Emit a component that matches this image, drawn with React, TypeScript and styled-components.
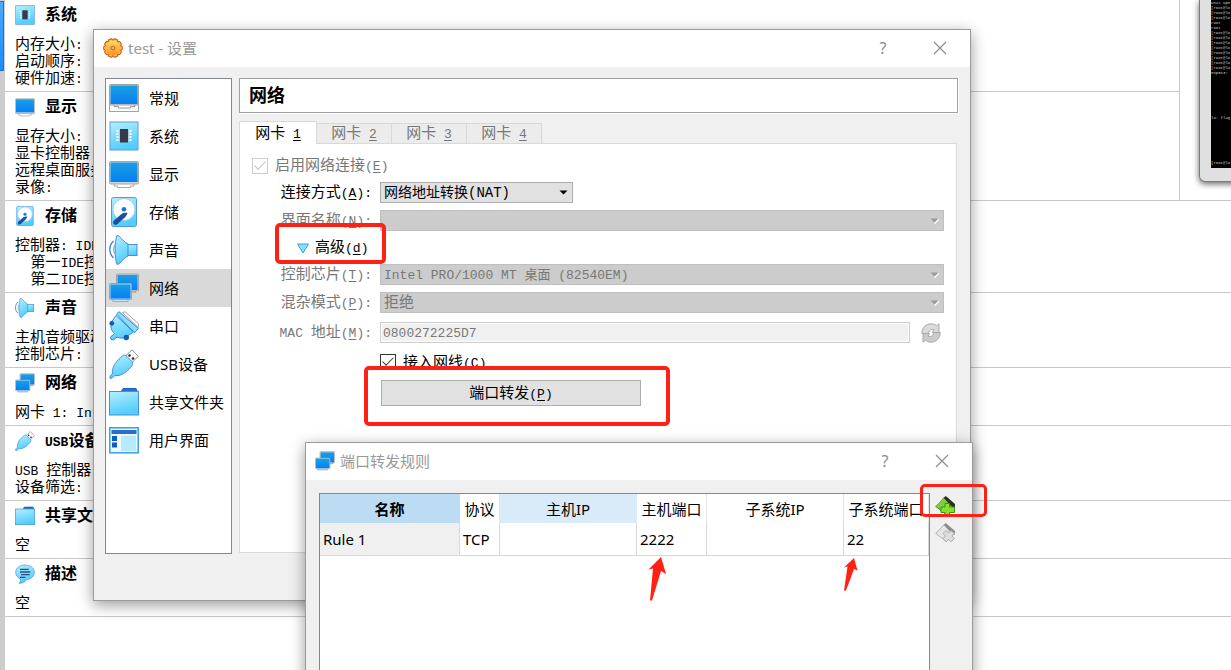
import React, { useId, useState } from "react";
import styled, { createGlobalStyle, css } from "styled-components";

const GlobalStyle = createGlobalStyle`
  *, *::before, *::after { box-sizing: border-box; }
  html, body { margin: 0; padding: 0; }
  body {
    font-family: "Liberation Mono", "Noto Sans CJK SC", monospace;
    font-size: 15px;
    color: #000;
    background: #fff;
  }
`;

const systemFont = css`
  font-family: "Liberation Mono", "Noto Sans CJK SC", monospace;
`;
const windowFont = css`
  font-family: "Noto Sans", "Noto Sans CJK SC", sans-serif;
`;

/* ---------- text ---------- */

const Latin = styled.span`
  font-size: 13px;
  white-space: pre;
`;

const Mnemonic = styled.span`
  text-decoration: underline;
  text-underline-offset: 2px;
`;

function Mixed({ text, mnemonic }: { text: string; mnemonic?: string }) {
  const parts = text.split(/([\x20-\x7e]+)/).filter(Boolean);
  return (
    <>
      {parts.map((part, i) => {
        if (!/^[\x20-\x7e]/.test(part)) return <React.Fragment key={i}>{part}</React.Fragment>;
        const at = mnemonic && i > 0 ? part.lastIndexOf(mnemonic) : -1;
        if (at < 0) return <Latin key={i}>{part}</Latin>;
        return (
          <Latin key={i}>
            {part.slice(0, at)}
            <Mnemonic>{part[at]}</Mnemonic>
            {part.slice(at + 1)}
          </Latin>
        );
      })}
    </>
  );
}

/* ---------- icons ---------- */

type IconName =
  | "general" | "system" | "display" | "storage" | "sound" | "network"
  | "serial" | "usb" | "folder" | "ui" | "description";

function IconArt({ name, id }: { name: IconName; id: string }) {
  const sky = `url(#${id}s)`;
  const screen = `url(#${id}b)`;
  switch (name) {
    case "general":
      return (
        <>
          <rect x="0.5" y="19" width="29" height="9.5" fill="#fafafa" stroke="#a3a3a3" />
          <path d="M5 22v1.500h4.500v1.500h12v-1.500h4.500V22" fill="#fff" stroke="#9a9a9a" />
          <rect x="0.500" y="1.500" width="29" height="20.500" rx="1" fill="#c9c9c9" stroke="#a3a3a3" />
          <rect x="1.500" y="2.500" width="27" height="18.500" fill={screen} />
        </>
      );
    case "display":
      return (
        <>
          <path d="M5 24h20v3h-3.500v1.500h-13V27H5z" fill="#fff" stroke="#a8a8a8" />
          <rect x="0.500" y="2.500" width="29" height="22.500" rx="1.500" fill="#d2d2d2" stroke="#a6a6a6" />
          <rect x="1.500" y="3.500" width="27" height="19.500" fill={screen} />
        </>
      );
    case "system":
      return (
        <>
          <rect x="1" y="1" width="28" height="28" fill={sky} stroke="#5a9fe0" />
          <path d="M7.500 10h15M7.500 13h15M7.500 16h15M7.500 19h15" stroke="#f5fbff" strokeWidth="2" />
          <path d="M9.500 10h11M9.500 13h11M9.500 16h11M9.500 19h11" stroke="#8b93a0" strokeWidth="1" />
          <rect x="11" y="8" width="8" height="13.500" fill="#363a48" />
        </>
      );
    case "storage":
      return (
        <>
          <rect x="2.500" y="0.500" width="25" height="29" rx="2" fill={sky} stroke="#4f9be2" />
          <circle cx="15" cy="12.500" r="11" fill="#fdfeff" stroke="#a9cdf0" />
          <circle cx="15" cy="12.300" r="2.300" fill="#1f74cc" />
          <path d="M5 23.500 12.500 17c1.500-1.200 4-1.500 6-1.200-.5 2-1.500 3.700-3 5L8 27.500c-2.500 1.500-5.300-1.500-3-4z" fill="#1c4f9f" />
        </>
      );
    case "sound":
      return (
        <>
          <path d="M4.500 6C-.5 11-.5 18 4.500 23" fill="none" stroke="#3a7fcc" strokeWidth="1.300" />
          <path d="M6 10c-2 2.500-2 6.500 0 9" fill="none" stroke="#7fb4e6" strokeWidth="1.200" />
          <rect x="18" y="9.500" width="10" height="11" fill={sky} stroke="#4390dc" />
          <path d="M8 .7c3.500-.5 4.500 5 11 8.300v12c-6.500 3.300-7.500 8.800-11 8.300C5.500 24 5.500 6 8 .7z" fill={sky} stroke="#4390dc" />
        </>
      );
    case "network":
      return (
        <>
          <path d="M12 17h13l2 2h-13z" fill="#ddd" stroke="#999" />
          <rect x="7.500" y="1" width="22" height="17" rx="1" fill="#d3d3d3" stroke="#9aa6b3" />
          <rect x="8.500" y="2" width="20" height="15" fill={screen} />
          <path d="M4 26.500h15v2H4z" fill="#cfe2f5" stroke="#8aaed4" />
          <rect x="0.500" y="10.500" width="22" height="16" rx="1" fill="#b6d4f0" stroke="#86a9cd" />
          <rect x="1.500" y="11.500" width="20" height="14" fill={screen} />
        </>
      );
    case "serial":
      return (
        <>
          <path d="M13.500 1.500 16 .8 29.300 12.500v4z" fill="#fff" stroke="#a3a3a3" />
          <path d="M7 4.500 2.500 11C1 16 2.500 20 5.500 22.500L1.500 26 2 28.500l2.500.5L8 26c3 1.500 6.500 1.500 9 0l7.500-5z" fill={sky} stroke="#378ad6" />
          <path d="M7.500 3 10 .7 29.400 17.500 25.500 21.700z" fill="#8adcfd" stroke="#378ad6" />
          <circle cx="2.800" cy="12.300" r="2.400" fill="#1758b8" />
          <circle cx="17.300" cy="26.500" r="2.700" fill="#1758b8" />
        </>
      );
    case "usb":
      return (
        <>
          <path d="M16 7.500 23 .8l6.300 6.400L22.500 14z" fill="#fafafa" stroke="#8d8d8d" />
          <circle cx="20.500" cy="6.500" r="1.200" fill="#222" />
          <circle cx="24" cy="9.500" r="1.200" fill="#222" />
          <path d="M13.500 7c1.500-1.200 3-1 4.500.5l4.500 4.500c1.500 1.500 1.500 3 .5 4.500C19.500 21.500 14 26 9 26.500l-3.500.2-2.500 2.500H1v-2l2.500-2.700L3.700 21C4 16 8.500 11 13.500 7z" fill={sky} stroke="#4390dc" />
        </>
      );
    case "folder":
      return (
        <>
          <path d="M11.500 6 14 1.500h13L29 6z" fill="#2c6fcd" stroke="#225fbc" />
          <rect x="0.500" y="4.500" width="29" height="23.500" fill={sky} stroke="#4390dc" />
        </>
      );
    case "ui":
      return (
        <>
          <rect x="0.800" y="2.800" width="28.400" height="25" fill="#eefaff" stroke="#35a0e4" strokeWidth="1.500" />
          <rect x="2.500" y="5" width="25" height="4" fill="#2a6cc8" />
          <rect x="3" y="11" width="5" height="5" fill="#0f5bc4" />
          <rect x="3" y="17.500" width="5" height="5" fill="#0f5bc4" />
          <rect x="12" y="10.500" width="15" height="15.500" fill="#b5eaff" />
        </>
      );
    case "description":
      return (
        <>
          <path d="M15 1.500c8 0 14 4.500 14 11S23.500 23 17.500 23.500c-2 3-6 5.500-11.500 5.500 2-2 2.500-4 2-6.500C4 20.500 1 17.500 1 12.500 1 6 7 1.500 15 1.500z" fill={sky} stroke="#4390dc" />
          <path d="M7.500 8h13M7.500 12h15.500M9 16h13M7.500 20h8" stroke="#28517f" strokeWidth="2" />
        </>
      );
  }
}

const IconSvg = styled.svg<{ $size: number }>`
  width: ${(p) => p.$size}px;
  height: ${(p) => p.$size}px;
  flex: none;
  display: block;
`;

function Icon({ name, size }: { name: IconName; size: number }) {
  const id = "g" + useId().replace(/[^a-zA-Z0-9]/g, "");
  return (
    <IconSvg $size={size} viewBox="0 0 30 30" aria-hidden="true">
      <defs>
        <linearGradient id={`${id}s`} x1="0" y1="0" x2="0.3" y2="1">
          <stop offset="0" stopColor="#b6effe" />
          <stop offset="1" stopColor="#52cdfc" />
        </linearGradient>
        <linearGradient id={`${id}b`} x1="0" y1="0" x2="0" y2="1">
          <stop offset="0" stopColor="#1b9fe4" />
          <stop offset="1" stopColor="#0480f4" />
        </linearGradient>
      </defs>
      <IconArt name={name} id={id} />
    </IconSvg>
  );
}

function GearIcon() {
  const teeth = Array.from({ length: 10 }, (_, i) => i * 36);
  return (
    <IconSvg $size={20} viewBox="0 0 20 20" aria-hidden="true">
      <defs>
        <linearGradient id="gear" x1="0" y1="0" x2="0" y2="1">
          <stop offset="0" stopColor="#ffd95f" />
          <stop offset="1" stopColor="#f8952b" />
        </linearGradient>
      </defs>
      <g fill="#c9571c">
        {teeth.map((a) => (
          <rect key={a} x="7.400" y="0.200" width="5.200" height="5" rx="1.600" transform={`rotate(${a + 18} 10 10)`} />
        ))}
      </g>
      <circle cx="10" cy="10" r="8.500" fill="#dd7226" />
      <g fill="#ffc045">
        {teeth.map((a) => (
          <rect key={a} x="8.500" y="1.200" width="3" height="4" rx="1" transform={`rotate(${a + 18} 10 10)`} />
        ))}
      </g>
      <circle cx="10" cy="10" r="7.400" fill="url(#gear)" />
      <circle cx="10" cy="10" r="2" fill="#f58b2a" stroke="#cf6a22" />
      <circle cx="10" cy="10" r="0.800" fill="#ffd9a0" />
    </IconSvg>
  );
}

function RefreshIcon() {
  return (
    <IconSvg $size={20} viewBox="0 0 20 20" aria-hidden="true">
      <path d="M.8 10.500C.8 4.500 4.800.8 10 .8c2.300 0 4 .7 5.500 2L18 .8v8.700h-6.500l1.500-2.800c-2.500-1-5 .3-5.500 3.800z" fill="#dadada" stroke="#a8a8a8" />
      <path d="M19.200 9.500c0 6-4 9.700-9.200 9.700-2.300 0-4-.7-5.500-2L2 19.200v-8.700h6.500L7 13.300c2.500 1 5-.3 5.500-3.800z" fill="#cbcbcb" stroke="#a8a8a8" />
    </IconSvg>
  );
}

function RuleIcon({ kind }: { kind: "add" | "remove" }) {
  const add = kind === "add";
  return (
    <IconSvg $size={20} viewBox="0 0 20 20" aria-hidden="true">
      <path
        d="M.8 10.500 9.500 1.200l9.800 9.300-8 8z"
        fill={add ? "#7ed03a" : "#e6e6e6"}
        stroke={add ? "#3f9a1b" : "#b4b4b4"}
      />
      {add && <path d="M.8 10.500 9.500 1.200" stroke="#e8892e" strokeWidth="1" />}
      <path d="m8.800 2 2-2 9.200 8v3.500l-2 .5z" fill={add ? "#26302a" : "#8e8e8e"} />
      {add ? (
        <path d="M10 7.500h4.500v3.500h5v5.500h-5v3H10v-3H6V11h4z" fill="#86e02c" stroke="#379316" />
      ) : (
        <path d="m8 10.500 3-3 2.500 2.500L16 7.500l3.300 3-2.500 2.500 2.500 2.500-3.300 3.300-2.500-2.500-2.500 2.500-3-3.300 2.500-2.500z" fill="#dedede" stroke="#a8a8a8" />
      )}
    </IconSvg>
  );
}

/* ---------- desktop behind the dialogs ---------- */

const Desktop = styled.div`
  position: relative;
  display: flex;
  height: 100vh;
  min-height: 620px;
  overflow: hidden;
  background: #fff;
`;

const MachineStrip = styled.div`
  flex: none;
  width: 5px;
  padding: 1px 1px 0 0;
  background: #cdcdcd;
`;

const ActiveMachine = styled.div`
  height: 70px;
  background: linear-gradient(#4aaaff, #1a8cff);
  border: 1px solid #1a76cf;
  border-left: 0;
`;

const Details = styled.main`
  flex: 1;
  min-width: 0;
`;

const TopRow = styled.div`
  display: flex;
`;

const TopSections = styled.div`
  flex: 1;
  min-width: 0;
`;

const SectionBox = styled.section`
  padding-bottom: 3px;
  border-bottom: 1px solid #c8c8c8;
`;

const SectionHead = styled.h2`
  display: flex;
  align-items: center;
  gap: 10px;
  height: 30px;
  margin: 0 0 7px;
  padding-left: 10px;
  font-size: 16px;
  font-weight: 700;
  line-height: 26px;
  white-space: nowrap;
`;

const SectionName = styled.span`
  padding-top: 2px;
`;

const SectionLine = styled.p`
  height: 17px;
  margin: 0;
  padding-left: 10px;
  line-height: 17px;
  white-space: nowrap;
`;

const Preview = styled.aside`
  flex: none;
  width: 52px;
  padding-left: 19px;
  overflow: hidden;
  border-left: 1px solid #c8c8c8;
  border-bottom: 1px solid #c8c8c8;
`;

const Monitor = styled.div`
  width: 200px;
  height: 182px;
  padding: 0 11px 13px;
  border: solid #7b7b7b;
  border-width: 0 1px 1px;
  border-radius: 0 0 6px 6px;
  background: #e0e0e0;
  box-shadow: 0 2px 6px rgba(0, 0, 0, 0.6);
`;

const Console = styled.pre`
  height: 168px;
  margin: 0;
  padding-top: 1px;
  overflow: hidden;
  background: #000;
  color: #d0d0d0;
  font: 4px/5px "Liberation Mono", monospace;
`;

const prompt = "[root@lo";
const consoleText = [
  "Unit ope",
  ...Array(3).fill(prompt),
  "root",
  "root",
  ...Array(8).fill(prompt),
  "enp0s3:",
  ...Array(8).fill(""),
  "lo: flag",
  ...Array(8).fill(""),
  prompt,
].join("\n");

type SectionData = { icon: IconName; title: string; lines: string[] };

const topSections: SectionData[] = [
  { icon: "system", title: "系统", lines: ["内存大小:", "启动顺序:", "硬件加速:"] },
  { icon: "display", title: "显示", lines: ["显存大小:", "显卡控制器:", "远程桌面服务器:", "录像:"] },
];

const lowerSections: SectionData[] = [
  { icon: "storage", title: "存储", lines: ["控制器: IDE", "  第一IDE控制器", "  第二IDE控制器"] },
  { icon: "sound", title: "声音", lines: ["主机音频驱动:", "控制芯片:"] },
  { icon: "network", title: "网络", lines: ["网卡 1: Intel"] },
  { icon: "usb", title: "USB设备", lines: ["USB 控制器:", "设备筛选:"] },
  { icon: "folder", title: "共享文件夹", lines: ["空"] },
  { icon: "description", title: "描述", lines: ["空"] },
];

function Section({ icon, title, lines }: SectionData) {
  return (
    <SectionBox>
      <SectionHead>
        <Icon name={icon} size={20} />
        <SectionName><Mixed text={title} /></SectionName>
      </SectionHead>
      {lines.map((line) => (
        <SectionLine key={line}><Mixed text={line} /></SectionLine>
      ))}
    </SectionBox>
  );
}

/* ---------- windows ---------- */

const Window = styled.section`
  position: absolute;
  border: 1px solid #9b9b9b;
  background: #f0f0f0;
  box-shadow: 0 4px 14px rgba(0, 0, 0, 0.4);
`;

const SettingsWindow = styled(Window)`
  top: 29px;
  left: 93px;
  right: 260px;
  min-width: 640px;
`;

const RulesWindow = styled(Window)`
  display: flex;
  flex-direction: column;
  top: 442px;
  left: 305px;
  right: 258px;
  min-width: 668px;
  height: 400px;
`;

const TitleBar = styled.header`
  display: flex;
  align-items: center;
  height: 37px;
  padding: 0 16px 2px 9px;
  background: #fff;
`;

const Title = styled.h1`
  flex: 1;
  margin: 0;
  padding-left: 5px;
  ${windowFont}
  font-size: 15px;
  font-weight: 400;
  color: #999;
`;

const TitleButton = styled.button`
  display: grid;
  place-items: center;
  width: 28px;
  height: 28px;
  margin-left: 29px;
  padding: 0;
  border: 0;
  background: none;
  color: #8c8c8c;
  ${windowFont}
  font-size: 16px;
`;

function WindowButtons() {
  return (
    <>
      <TitleButton type="button" aria-label="帮助">?</TitleButton>
      <TitleButton type="button" aria-label="关闭">
        <svg width="14" height="14" viewBox="0 0 14 14" aria-hidden="true">
          <path d="m1 1 12 12M13 1 1 13" stroke="#8c8c8c" strokeWidth="1.1" />
        </svg>
      </TitleButton>
    </>
  );
}

const SettingsBody = styled.div`
  display: flex;
  gap: 7px;
  padding: 11px 12px 46px 11px;
`;

const Nav = styled.nav`
  flex: none;
  width: 127px;
  min-height: 476px;
  border: 1px solid #828790;
  background: #fff;
`;

const NavItem = styled.button<{ $active: boolean }>`
  display: flex;
  align-items: center;
  gap: 10px;
  width: 100%;
  height: 38px;
  padding: 0 0 0 3px;
  border: 0;
  background: ${(p) => (p.$active ? "#d9d9d9" : "transparent")};
  color: #000;
  ${windowFont}
  font-size: 15px;
  white-space: nowrap;
`;

const NavLabel = styled.span`
  padding-bottom: 2px;
`;

const navItems: [IconName, string][] = [
  ["general", "常规"],
  ["system", "系统"],
  ["display", "显示"],
  ["storage", "存储"],
  ["sound", "声音"],
  ["network", "网络"],
  ["serial", "串口"],
  ["usb", "USB设备"],
  ["folder", "共享文件夹"],
  ["ui", "用户界面"],
];

const Page = styled.div`
  display: flex;
  flex: 1;
  flex-direction: column;
  min-width: 0;
`;

const PageTitle = styled.h2`
  height: 35px;
  margin: 0 0 8px;
  padding-left: 9px;
  border: 1px solid #a0a0a0;
  background: #fff;
  box-shadow: 1px 1px 0 #fff;
  ${windowFont}
  font-size: 18px;
  font-weight: 700;
  line-height: 33px;
`;

const Tabs = styled.div`
  display: flex;
  align-items: flex-end;
  height: 22px;
`;

const Tab = styled.button<{ $active: boolean }>`
  position: relative;
  width: ${(p) => (p.$active ? 78 : 75)}px;
  height: ${(p) => (p.$active ? 23 : 20)}px;
  margin-bottom: ${(p) => (p.$active ? -1 : 0)}px;
  padding: 2px 0 0;
  border: 1px solid #d9d9d9;
  border-left-width: ${(p) => (p.$active ? 1 : 0)}px;
  border-bottom: 0;
  background: ${(p) => (p.$active ? "#fff" : "#ececec")};
  color: ${(p) => (p.$active ? "#000" : "#787878")};
  z-index: ${(p) => (p.$active ? 1 : 0)};
  ${systemFont}
  font-size: 15px;
  line-height: 17px;
`;

const TabPane = styled.div`
  display: flex;
  flex: 1;
  flex-direction: column;
  gap: 7px;
  margin: 0 1px 1px 0;
  padding: 12px 12px 0 0;
  border: 1px solid #d9d9d9;
  background: #fff;
`;

const FieldRow = styled.div<{ $height: number; $muted?: boolean }>`
  display: grid;
  grid-template-columns: 132px minmax(0, 1fr);
  column-gap: 8px;
  align-items: center;
  height: ${(p) => p.$height}px;
  color: ${(p) => (p.$muted ? "#787878" : "#000")};
`;

const FieldLabel = styled.label`
  padding-top: 2px;
  line-height: 19px;
  text-align: right;
  white-space: nowrap;
`;

const CheckRow = styled.div<{ $muted?: boolean; $indent: number }>`
  display: flex;
  align-items: center;
  gap: 7px;
  height: 20px;
  padding-left: ${(p) => p.$indent}px;
  color: ${(p) => (p.$muted ? "#787878" : "#000")};
  line-height: 18px;

  &:first-child { height: 19px; }

  label { padding-top: 3px; }
`;

const CheckBox = styled.input`
  appearance: none;
  display: grid;
  place-items: center;
  width: 16px;
  height: 16px;
  margin: 0;
  border: 1px solid #333;
  background: #fff;

  &:disabled { border-color: #ccc; }
  &:checked::before {
    content: "";
    width: 12px;
    height: 6px;
    margin-top: -4px;
    border: solid #333;
    border-width: 0 0 1px 1px;
    rotate: -45deg;
    scale: 0.9;
  }
  &:disabled:checked::before { border-color: #bbb; }
`;

const SelectWrap = styled.div<{ $width?: number }>`
  position: relative;
  width: ${(p) => (p.$width ? `${p.$width}px` : "100%")};
  height: 21px;
`;

const SelectBox = styled.select<{ $size: number }>`
  appearance: none;
  display: block;
  width: 100%;
  height: 21px;
  padding: 1px 20px 0 3px;
  border: 1px solid #adadad;
  border-radius: 0;
  background: #e1e1e1;
  color: #000;
  ${systemFont}
  font-size: ${(p) => p.$size}px;
  line-height: 19px;

  &:disabled {
    border-color: #bfbfbf;
    background: #ccc;
    color: #787878;
    opacity: 1;
  }
`;

const SelectArrow = styled.svg`
  position: absolute;
  top: 8px;
  right: 5px;
  width: 9px;
  height: 6px;
  pointer-events: none;
`;

function Select(props: { id: string; label: string; value: string; size?: number; width?: number; disabled?: boolean }) {
  return (
    <SelectWrap $width={props.width}>
      <SelectBox id={props.id} $size={props.size ?? 15} disabled={props.disabled} aria-label={props.label} defaultValue={props.value}>
        <option value={props.value}>{props.value}</option>
      </SelectBox>
      <SelectArrow viewBox="0 0 9 6" aria-hidden="true">
        {props.disabled && <path d="M9 1 4.500 5.500" stroke="#fff" strokeWidth="1.500" />}
        <path d="M.5.500h8l-4 4z" fill={props.disabled ? "#9a9a9a" : "#000"} />
      </SelectArrow>
    </SelectWrap>
  );
}

const AdvancedToggle = styled.button`
  display: flex;
  align-items: center;
  gap: 5px;
  height: 19px;
  margin-left: 56px;
  padding: 2px 0 0;
  align-self: flex-start;
  border: 0;
  background: none;
  color: #000;
  ${systemFont}
  font-size: 15px;
  line-height: 18px;
`;

const MacLine = styled.div`
  display: flex;
  align-items: center;
  gap: 11px;
`;

const MacInput = styled.input`
  flex: 1;
  min-width: 0;
  height: 21px;
  padding: 1px 2px 0;
  border: 1px solid #ccc;
  background: #f0f0f0;
  box-shadow: inset 0 0 0 1px #fff;
  color: #787878;
  ${systemFont}
  font-size: 13px;
`;

const IconButton = styled.button`
  display: grid;
  place-content: center start;
  width: 23px;
  height: 24px;
  padding: 0;
  border: 0;
  background: none;
`;

const ForwardButton = styled.button`
  flex: none;
  align-self: flex-start;
  width: 260px;
  height: 26px;
  margin: 1px 0 0 141px;
  padding: 3px 0 0;
  border: 1px solid #adadad;
  background: #e1e1e1;
  color: #000;
  ${systemFont}
  font-size: 15px;
  line-height: 21px;
`;

/* ---------- forwarding rules ---------- */

const RulesBody = styled.div`
  display: flex;
  flex: 1;
  padding: 13px 0 12px 13px;
`;

const TableFrame = styled.div`
  flex: 1;
  min-width: 0;
  overflow: hidden;
  border: 1px solid #828790;
  background: #fff;
`;

const RulesTable = styled.table`
  width: 609px;
  table-layout: fixed;
  border-collapse: separate;
  border-spacing: 0;
  ${windowFont}
  font-size: 15px;
`;

const HeadCell = styled.th<{ $tone?: string; $strong?: boolean }>`
  height: 29px;
  padding: 0;
  border-right: 1px solid ${(p) => p.$tone ?? "#e5e5e5"};
  background: ${(p) => p.$tone ?? "#fff"};
  font-weight: ${(p) => (p.$strong ? 700 : 400)};
  line-height: 28px;
  text-align: center;
  white-space: nowrap;
`;

const Cell = styled.td<{ $shaded?: boolean }>`
  height: 33px;
  padding: 0 0 0 3px;
  border: solid #d8d8d8;
  border-width: 0 1px 1px 0;
  background: ${(p) => (p.$shaded ? "#f0f0f0" : "#fff")};
  line-height: 32px;
  white-space: nowrap;
`;

const RulesTools = styled.div`
  display: flex;
  flex: none;
  flex-direction: column;
  gap: 3px;
  width: 42px;
  padding: 1px 0 0 5px;
`;

const columns = [
  { label: "名称", width: 140, tone: "#bbdcf3", value: "Rule 1" },
  { label: "协议", width: 40, value: "TCP" },
  { label: "主机IP", width: 137, tone: "#d9ebf9", value: "" },
  { label: "主机端口", width: 70, value: "2222" },
  { label: "子系统IP", width: 137, value: "" },
  { label: "子系统端口", width: 85, value: "22" },
];

/* ---------- hand-drawn marks ---------- */

const RedFrame = styled.div<{ $top: number; $left?: number; $right?: number; $width: number; $height: number; $line: number }>`
  position: absolute;
  top: ${(p) => p.$top}px;
  ${(p) => (p.$right !== undefined ? `right: ${p.$right}px;` : `left: ${p.$left}px;`)}
  width: ${(p) => p.$width}px;
  height: ${(p) => p.$height}px;
  border: ${(p) => p.$line}px solid #ff2113;
  border-radius: 5px;
  pointer-events: none;
`;

const RedArrow = styled.svg<{ $left: number; $top: number }>`
  position: absolute;
  left: ${(p) => p.$left}px;
  top: ${(p) => p.$top}px;
  pointer-events: none;
`;

export default function App() {
  const [cable, setCable] = useState(true);
  return (
    <>
      <GlobalStyle />
      <Desktop>
        <MachineStrip><ActiveMachine /></MachineStrip>
        <Details>
          <TopRow>
            <TopSections>
              {topSections.map((s) => <Section key={s.title} {...s} />)}
            </TopSections>
            <Preview>
              <Monitor><Console>{consoleText}</Console></Monitor>
            </Preview>
          </TopRow>
          {lowerSections.map((s) => <Section key={s.title} {...s} />)}
        </Details>

        <SettingsWindow role="dialog" aria-labelledby="settings-title">
          <TitleBar>
            <GearIcon />
            <Title id="settings-title">test - 设置</Title>
            <WindowButtons />
          </TitleBar>
          <SettingsBody>
            <Nav>
              {navItems.map(([icon, label]) => (
                <NavItem key={label} type="button" $active={icon === "network"}>
                  <Icon name={icon} size={30} />
                  <NavLabel>{label}</NavLabel>
                </NavItem>
              ))}
            </Nav>
            <Page>
              <PageTitle>网络</PageTitle>
              <Tabs role="tablist">
                {["1", "2", "3", "4"].map((n) => (
                  <Tab key={n} type="button" role="tab" aria-selected={n === "1"} $active={n === "1"}>
                    <Mixed text={`网卡 ${n}`} mnemonic={n} />
                  </Tab>
                ))}
              </Tabs>
              <TabPane role="tabpanel">
                <CheckRow $muted $indent={12}>
                  <CheckBox id="enable" type="checkbox" checked readOnly disabled />
                  <label htmlFor="enable"><Mixed text="启用网络连接(E)" mnemonic="E" /></label>
                </CheckRow>
                <FieldRow $height={21}>
                  <FieldLabel htmlFor="attached"><Mixed text="连接方式(A):" mnemonic="A" /></FieldLabel>
                  <Select id="attached" label="连接方式" value="网络地址转换(NAT)" size={14} width={193} />
                </FieldRow>
                <FieldRow $height={21} $muted>
                  <FieldLabel htmlFor="name"><Mixed text="界面名称(N):" mnemonic="N" /></FieldLabel>
                  <Select id="name" label="界面名称" value="" disabled />
                </FieldRow>
                <AdvancedToggle type="button" aria-expanded="true">
                  <svg width="14" height="11" viewBox="0 0 14 11" aria-hidden="true">
                    <path d="M1.500 1h11L7 10z" fill="#8be0fd" stroke="#3f9ce0" strokeLinejoin="round" />
                  </svg>
                  <span><Mixed text="高级(d)" mnemonic="d" /></span>
                </AdvancedToggle>
                <FieldRow $height={21} $muted>
                  <FieldLabel htmlFor="chip"><Mixed text="控制芯片(T):" mnemonic="T" /></FieldLabel>
                  <Select id="chip" label="控制芯片" value="Intel PRO/1000 MT 桌面 (82540EM)" size={13} disabled />
                </FieldRow>
                <FieldRow $height={21} $muted>
                  <FieldLabel htmlFor="promiscuous"><Mixed text="混杂模式(P):" mnemonic="P" /></FieldLabel>
                  <Select id="promiscuous" label="混杂模式" value="拒绝" disabled />
                </FieldRow>
                <FieldRow $height={25} $muted>
                  <FieldLabel htmlFor="mac"><Mixed text="MAC 地址(M):" mnemonic="M" /></FieldLabel>
                  <MacLine>
                    <MacInput id="mac" defaultValue="0800272225D7" disabled />
                    <IconButton type="button" aria-label="刷新" disabled><RefreshIcon /></IconButton>
                  </MacLine>
                </FieldRow>
                <CheckRow $indent={140}>
                  <CheckBox id="cable" type="checkbox" checked={cable} onChange={(e) => setCable(e.target.checked)} />
                  <label htmlFor="cable"><Mixed text="接入网线(C)" mnemonic="C" /></label>
                </CheckRow>
                <ForwardButton type="button"><Mixed text="端口转发(P)" mnemonic="P" /></ForwardButton>
              </TabPane>
            </Page>
          </SettingsBody>
          <RedFrame $top={193} $left={181} $width={111} $height={41} $line={4} />
          <RedFrame $top={336} $left={270} $width={306} $height={60} $line={4} />
        </SettingsWindow>

        <RulesWindow role="dialog" aria-labelledby="rules-title">
          <TitleBar>
            <Icon name="network" size={20} />
            <Title id="rules-title">端口转发规则</Title>
            <WindowButtons />
          </TitleBar>
          <RulesBody>
            <TableFrame>
              <RulesTable>
                <colgroup>
                  {columns.map((c) => <col key={c.label} width={c.width} />)}
                </colgroup>
                <thead>
                  <tr>
                    {columns.map((c, i) => (
                      <HeadCell key={c.label} scope="col" $tone={c.tone} $strong={i === 0}>{c.label}</HeadCell>
                    ))}
                  </tr>
                </thead>
                <tbody>
                  <tr>
                    {columns.map((c, i) => <Cell key={c.label} $shaded={i === 0}>{c.value}</Cell>)}
                  </tr>
                </tbody>
              </RulesTable>
            </TableFrame>
            <RulesTools>
              <IconButton type="button" aria-label="添加规则"><RuleIcon kind="add" /></IconButton>
              <IconButton type="button" aria-label="删除规则" disabled><RuleIcon kind="remove" /></IconButton>
            </RulesTools>
          </RulesBody>
          <RedArrow $left={342} $top={114} width="18" height="44" viewBox="0 0 18 44" aria-hidden="true">
            <path d="M13 0 18 17l-5-3L4 43.500H2L5 11.500.500 12.500z" fill="#ff2113" />
          </RedArrow>
          <RedArrow $left={537} $top={115} width="15" height="34" viewBox="0 0 15 34" aria-hidden="true">
            <path d="M11 0 14.500 12.500 11 11 3 32.500H1L4.500 8.500 1 9.500z" fill="#ff2113" />
          </RedArrow>
          <RedFrame $top={41} $right={-15} $width={67} $height={33} $line={3} />
        </RulesWindow>
      </Desktop>
    </>
  );
}
